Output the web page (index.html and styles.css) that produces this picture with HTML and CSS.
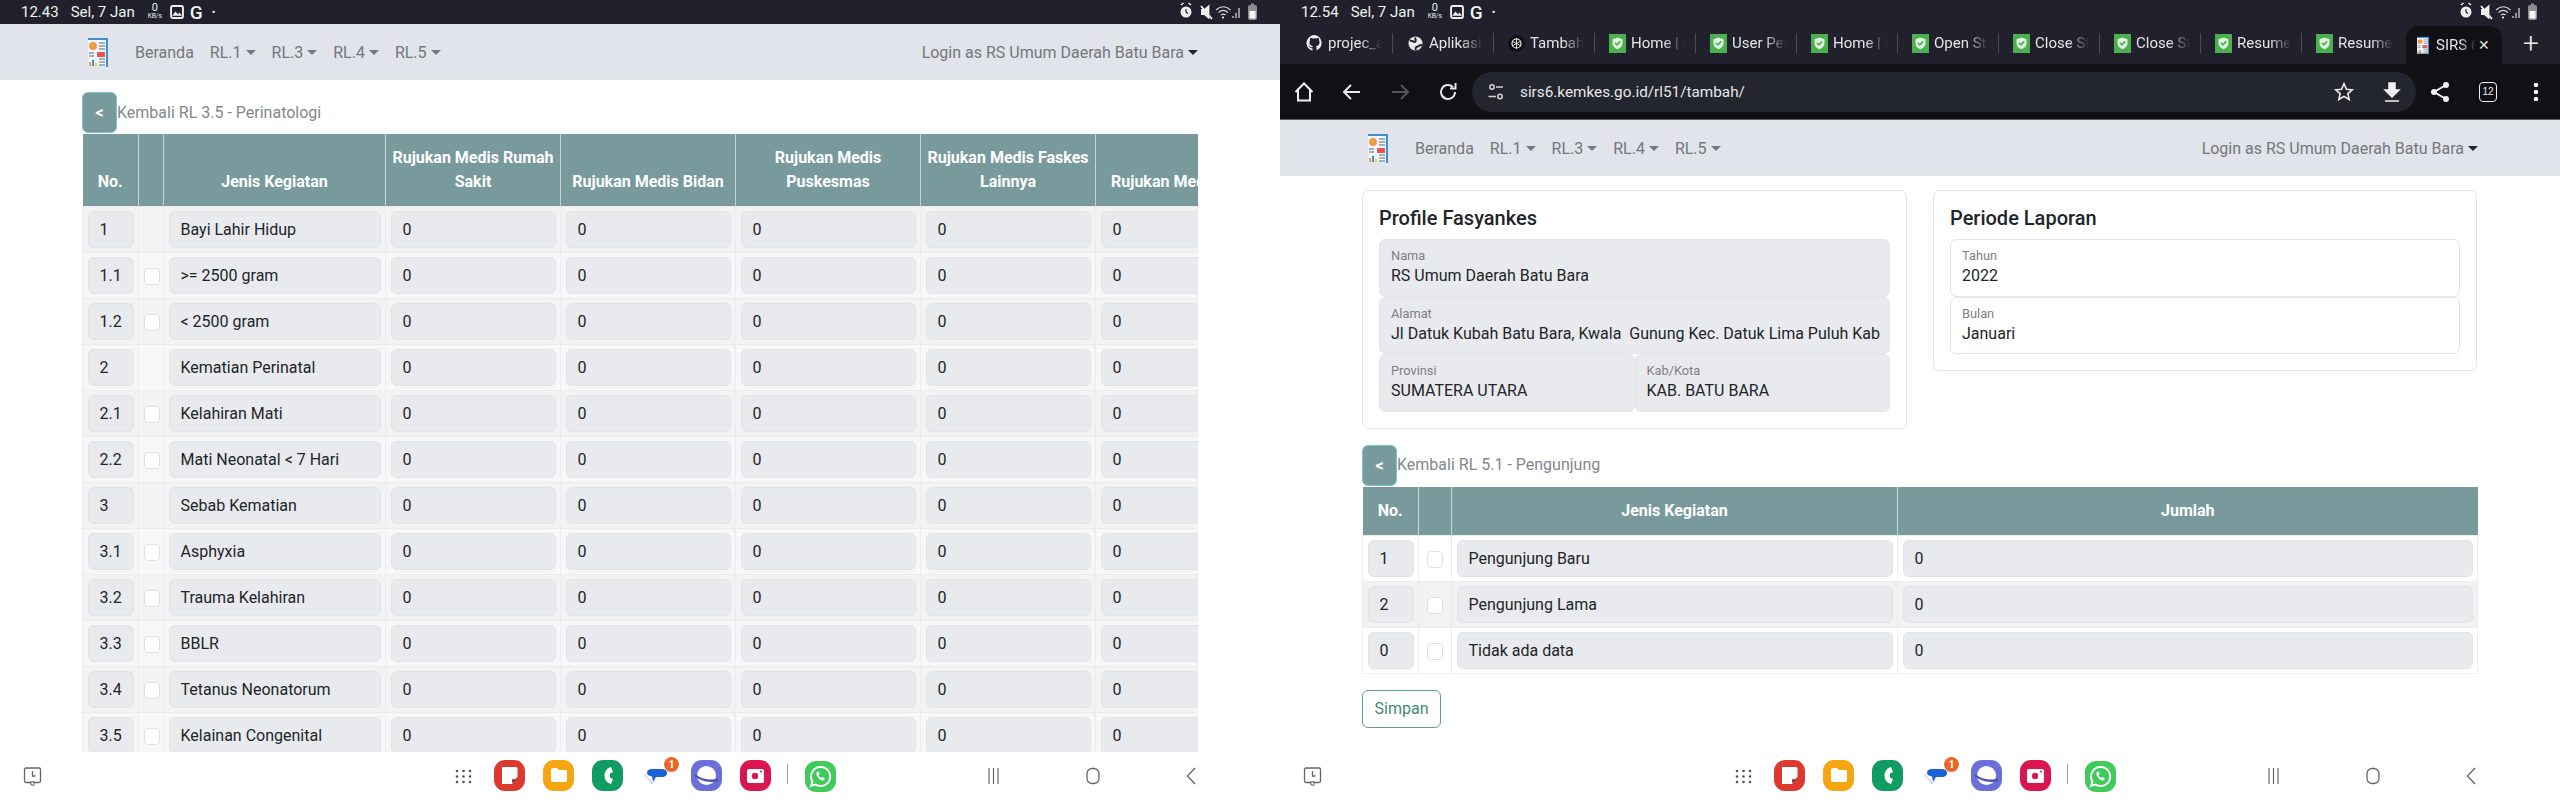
FILE: index.html
```html
<!DOCTYPE html>
<html lang="id">
<head>
  <meta charset="UTF-8" />
  <title>SIRS 6</title>
  <link rel="stylesheet" href="styles.css">
</head>
<body>

  <svg class="defs" width="0" height="0">
    <symbol id="ico-shield" viewBox="0 0 17 19">
      <rect width="17" height="19" fill="#4caf50"/>
      <path d="M8.5 3.5l5 1.8v4c0 3-2.2 5-5 6-2.8-1-5-3-5-6v-4z" fill="#dff3df"/>
      <path d="M5.9 8.8l2 2 3.3-3.4" fill="none" stroke="#4caf50" stroke-width="1.6"/>
    </symbol>
    <symbol id="ico-logo" viewBox="0 0 20 29">
      <rect x="0" y="0" width="20" height="2" fill="#3f8fd0"/>
      <rect x="18" y="0" width="2" height="29" fill="#3f8fd0"/>
      <rect x="0" y="2" width="18" height="26" fill="#f2f5f8"/>
      <circle cx="5" cy="8" r="4" fill="#ef9a4a"/>
      <path d="M11 5h6M11 8h6M11 11h6M1 15h5M1 18h5M11 24h6M11 21h6M11 27h6" stroke="#8a97a3" stroke-width="1.3"/>
      <rect x="9" y="14" width="8" height="5" fill="#e0565a"/>
      <rect x="1" y="24" width="2" height="4" fill="#ef9a4a"/>
      <rect x="4" y="22" width="2" height="6" fill="#3f8fd0"/>
      <rect x="7" y="25" width="2" height="3" fill="#e8c14a"/>
    </symbol>
    <symbol id="ico-status" viewBox="0 0 80 20">
      <circle cx="6" cy="10" r="5.5" fill="#f1f1f1"/>
      <path d="M1 3l2.5-2M11 3L8.5 1" stroke="#f1f1f1" stroke-width="1.6"/>
      <path d="M6 7v3l2 1.5" stroke="#20212d" stroke-width="1.2" fill="none"/>
      <path d="M22 8h2.5l4-3.5v11l-4-3.5H22zM21 4l11 13" stroke="#f1f1f1" stroke-width="1.8" fill="#f1f1f1"/>
      <path d="M36 8c4.5-4 10-4 14.5 0M38.5 10.5c3-2.6 6.5-2.6 9.5 0M41 13c1.5-1.2 3-1.2 4.5 0" stroke="#d8d8d8" stroke-width="1.1" fill="none"/>
      <circle cx="43" cy="15.5" r="1.1" fill="#f1f1f1"/>
      <path d="M53 16v-2M56 16v-5M59 16V6" stroke="#cfcfcf" stroke-width="1.3"/>
      <rect x="68" y="3" width="9" height="15" rx="2" fill="#8c8d94"/>
      <rect x="69.5" y="9" width="6" height="7.5" fill="#f4f4f4"/>
      <rect x="71" y="1.5" width="3" height="2" fill="#8c8d94"/>
    </symbol>
    <symbol id="ico-apps" viewBox="0 0 350 32">
      <!-- dock icons, drawn on one strip -->
      <rect x="39" y="0" width="31" height="31" rx="11" fill="#dc3a2e"/>
      <path d="M47 7h14a1.5 1.5 0 011.5 1.5V17l-5 7H47z" fill="#fff"/>
      <path d="M57 19c2 1 3.5 0 5.5-1.5l-5 6.5z" fill="#8a1f18"/>
      <rect x="88" y="0" width="31" height="31" rx="11" fill="#f5a50f"/>
      <path d="M96 10a2 2 0 012-2h4l2 2h6a2 2 0 012 2v8a2 2 0 01-2 2H98a2 2 0 01-2-2z" fill="#fff"/>
      <rect x="137" y="0" width="31" height="31" rx="11" fill="#0f9d64"/>
      <path d="M156 7c-4 1-6.5 4.5-6.5 8.5s2.5 7.5 6.5 8.5l2-5-3-1.5v-4l3-1.5z" fill="#fff"/>
      <rect x="186" y="0" width="31" height="31" rx="11" fill="#fff"/>
      <path d="M192 13c0-2.5 2-4 5-4h10c3 0 5 1.5 5 4s-2 4-5 4h-6l-3 5-1-5.5c-3-.5-5-1.5-5-3.5z" fill="#1a62d6"/>
      <path d="M190 14c0 3 2 5 5 5.5l2 4 3-4" fill="none" stroke="#a9c6f3" stroke-width="1"/>
      <rect x="236" y="0" width="31" height="31" rx="11" fill="#6a6fd9"/>
      <circle cx="251.5" cy="15.5" r="9.5" fill="#fff"/>
      <path d="M240 15c5 5 15 7 23 5" fill="none" stroke="#4a4fb8" stroke-width="2.4"/>
      <rect x="285" y="0" width="31" height="31" rx="11" fill="#d9164f"/>
      <rect x="292" y="9" width="17" height="14" rx="2" fill="#fff"/>
      <circle cx="300" cy="16" r="3.2" fill="#d9164f"/>
      <circle cx="306" cy="11.5" r="1" fill="#d9164f"/>
      <rect x="332" y="4" width="1" height="20" fill="#9a9a9a"/>
    </symbol>
    <symbol id="ico-wa" viewBox="0 0 31 31">
      <rect width="31" height="31" rx="11" fill="#3ecb5a"/>
      <path d="M15.5 6a9.5 9.5 0 00-8 14.5L6 25l4.7-1.4A9.5 9.5 0 1015.5 6z" fill="none" stroke="#fff" stroke-width="2"/>
      <path d="M12 11c-1 1-1 3 1 5.5s4.5 3.5 6 2.5l1-1.5-2.5-1.5-1 1c-1.5-.5-2.5-2-3-3l1-1-1-2.5z" fill="#fff"/>
    </symbol>
  </svg>

  <div class="screens">

    <!-- tablet kiri: RL 3.5 -->
    <section class="screen">
      <div class="status">
        <div class="status-left">
          <span class="time">12.43</span><span class="date">Sel, 7 Jan</span>
          <span class="speed"><b>0</b><i>KB/s</i></span>
          <svg class="pic" viewBox="0 0 13 13"><rect x="1" y="1" width="11" height="11" rx="1.5" fill="none" stroke="#eee" stroke-width="1.8"/><path d="M2 10l3-4 2.5 2.5L9 7l2 3z" fill="#eee"/></svg>
          <span class="g">G</span><span class="dot">•</span>
        </div>
        <svg class="status-right"><use href="#ico-status"/></svg>
      </div>

      <nav class="navbar">
        <svg class="logo"><use href="#ico-logo"/></svg>
        <a class="nav-link">Beranda</a>
        <a class="nav-link drop">RL.1</a>
        <a class="nav-link drop">RL.3</a>
        <a class="nav-link drop">RL.4</a>
        <a class="nav-link drop">RL.5</a>
        <a class="nav-user drop">Login as RS Umum Daerah Batu Bara</a>
      </nav>

      <main class="content">
        <div class="back-row">
          <button class="btn-back">&lt;</button>
          <span class="back-text">Kembali RL 3.5 - Perinatologi</span>
        </div>
        <div class="table-scroll">
          <table class="tbl tbl-wide">
            <colgroup>
              <col class="c-no"><col class="c-check"><col class="c-name">
              <col class="c-175"><col class="c-175"><col class="c-185"><col class="c-175"><col class="c-185">
            </colgroup>
            <thead>
              <tr>
                <th>No.</th><th></th><th>Jenis Kegiatan</th>
                <th>Rujukan Medis Rumah Sakit</th><th>Rujukan Medis Bidan</th><th>Rujukan Medis Puskesmas</th><th>Rujukan Medis Faskes Lainnya</th><th class="th-cut">Rujukan Medis</th>
              </tr>
            </thead>
            <tbody>
              <tr><td><div class="fc">1</div></td><td></td><td><div class="fc">Bayi Lahir Hidup</div></td><td><div class="fc">0</div></td><td><div class="fc">0</div></td><td><div class="fc">0</div></td><td><div class="fc">0</div></td><td><div class="fc">0</div></td></tr>
              <tr><td><div class="fc">1.1</div></td><td><input type="checkbox" class="chk"></td><td><div class="fc">&gt;= 2500 gram</div></td><td><div class="fc">0</div></td><td><div class="fc">0</div></td><td><div class="fc">0</div></td><td><div class="fc">0</div></td><td><div class="fc">0</div></td></tr>
              <tr><td><div class="fc">1.2</div></td><td><input type="checkbox" class="chk"></td><td><div class="fc">&lt; 2500 gram</div></td><td><div class="fc">0</div></td><td><div class="fc">0</div></td><td><div class="fc">0</div></td><td><div class="fc">0</div></td><td><div class="fc">0</div></td></tr>
              <tr><td><div class="fc">2</div></td><td></td><td><div class="fc">Kematian Perinatal</div></td><td><div class="fc">0</div></td><td><div class="fc">0</div></td><td><div class="fc">0</div></td><td><div class="fc">0</div></td><td><div class="fc">0</div></td></tr>
              <tr><td><div class="fc">2.1</div></td><td><input type="checkbox" class="chk"></td><td><div class="fc">Kelahiran Mati</div></td><td><div class="fc">0</div></td><td><div class="fc">0</div></td><td><div class="fc">0</div></td><td><div class="fc">0</div></td><td><div class="fc">0</div></td></tr>
              <tr><td><div class="fc">2.2</div></td><td><input type="checkbox" class="chk"></td><td><div class="fc">Mati Neonatal &lt; 7 Hari</div></td><td><div class="fc">0</div></td><td><div class="fc">0</div></td><td><div class="fc">0</div></td><td><div class="fc">0</div></td><td><div class="fc">0</div></td></tr>
              <tr><td><div class="fc">3</div></td><td></td><td><div class="fc">Sebab Kematian</div></td><td><div class="fc">0</div></td><td><div class="fc">0</div></td><td><div class="fc">0</div></td><td><div class="fc">0</div></td><td><div class="fc">0</div></td></tr>
              <tr><td><div class="fc">3.1</div></td><td><input type="checkbox" class="chk"></td><td><div class="fc">Asphyxia</div></td><td><div class="fc">0</div></td><td><div class="fc">0</div></td><td><div class="fc">0</div></td><td><div class="fc">0</div></td><td><div class="fc">0</div></td></tr>
              <tr><td><div class="fc">3.2</div></td><td><input type="checkbox" class="chk"></td><td><div class="fc">Trauma Kelahiran</div></td><td><div class="fc">0</div></td><td><div class="fc">0</div></td><td><div class="fc">0</div></td><td><div class="fc">0</div></td><td><div class="fc">0</div></td></tr>
              <tr><td><div class="fc">3.3</div></td><td><input type="checkbox" class="chk"></td><td><div class="fc">BBLR</div></td><td><div class="fc">0</div></td><td><div class="fc">0</div></td><td><div class="fc">0</div></td><td><div class="fc">0</div></td><td><div class="fc">0</div></td></tr>
              <tr><td><div class="fc">3.4</div></td><td><input type="checkbox" class="chk"></td><td><div class="fc">Tetanus Neonatorum</div></td><td><div class="fc">0</div></td><td><div class="fc">0</div></td><td><div class="fc">0</div></td><td><div class="fc">0</div></td><td><div class="fc">0</div></td></tr>
              <tr><td><div class="fc">3.5</div></td><td><input type="checkbox" class="chk"></td><td><div class="fc">Kelainan Congenital</div></td><td><div class="fc">0</div></td><td><div class="fc">0</div></td><td><div class="fc">0</div></td><td><div class="fc">0</div></td><td><div class="fc">0</div></td></tr>
            </tbody>
          </table>
        </div>
      </main>

      <div class="dock">
        <svg class="dock-clock" viewBox="0 0 19 19"><path d="M3 1h13a1.5 1.5 0 011.5 1.5V14a1.5 1.5 0 01-1.5 1.5H3A1.5 1.5 0 011.5 14V2.5A1.5 1.5 0 013 1z" fill="none" stroke="#666" stroke-width="1.3"/><path d="M9.5 4v5h3" fill="none" stroke="#666" stroke-width="1.3"/><circle cx="9.5" cy="16.5" r="1.8" fill="#fff" stroke="#666" stroke-width="1.2"/></svg>
        <svg class="dock-grid" viewBox="0 0 17 15"><g fill="#555"><circle cx="2" cy="2" r="1.3"/><circle cx="8.5" cy="2" r="1.3"/><circle cx="15" cy="2" r="1.3"/><circle cx="2" cy="7.5" r="1.3"/><circle cx="8.5" cy="7.5" r="1.3"/><circle cx="15" cy="7.5" r="1.3"/><circle cx="2" cy="13" r="1.3"/><circle cx="8.5" cy="13" r="1.3"/><circle cx="15" cy="13" r="1.3"/></g></svg>
        <div class="dock-apps">
          <svg class="apps-strip"><use href="#ico-apps"/></svg>
          <span class="badge">1</span>
        </div>
        <svg class="dock-wa"><use href="#ico-wa"/></svg>
        <svg class="nav-recent" viewBox="0 0 11 18"><path d="M1 1v16M5.5 1v16M10 1v16" stroke="#666" stroke-width="1.2"/></svg>
        <svg class="nav-home" viewBox="0 0 14 18"><rect x="1" y="1.5" width="12" height="15" rx="5" fill="none" stroke="#666" stroke-width="1.3"/></svg>
        <svg class="nav-back" viewBox="0 0 10 18"><path d="M9 1L1.5 9 9 17" fill="none" stroke="#666" stroke-width="1.3"/></svg>
      </div>
    </section>

    <!-- tablet kanan: RL 5.1 dengan browser -->
    <section class="screen">
      <div class="status">
        <div class="status-left">
          <span class="time">12.54</span><span class="date">Sel, 7 Jan</span>
          <span class="speed"><b>0</b><i>KB/s</i></span>
          <svg class="pic" viewBox="0 0 13 13"><rect x="1" y="1" width="11" height="11" rx="1.5" fill="none" stroke="#eee" stroke-width="1.8"/><path d="M2 10l3-4 2.5 2.5L9 7l2 3z" fill="#eee"/></svg>
          <span class="g">G</span><span class="dot">•</span>
        </div>
        <svg class="status-right"><use href="#ico-status"/></svg>
      </div>

      <div class="tabs">
        <div class="tab">
          <svg class="fav" viewBox="0 0 17 19"><path d="M8.5 1a8 8 0 00-2.5 15.600c.4 0 .5-.2.5-.4v-2c-2.200.5-2.700-.9-2.700-.9-.4-.9-.9-1.200-.9-1.200-.7-.5 0-.5 0-.5.8 0 1.200.8 1.200.8.700 1.200 1.900.9 2.400.7 0-.5.300-.9.500-1.100-1.800-.2-3.600-.9-3.600-4 0-.9.300-1.600.8-2.100-.1-.2-.4-1 .1-2.100 0 0 .7-.2 2.200.8a7.600 7.600 0 014 0c1.500-1 2.200-.8 2.200-.8.500 1.100.2 1.900.1 2.100.5.600.8 1.300.8 2.100 0 3.100-1.900 3.800-3.700 4 .3.300.6.700.6 1.500v2.200c0 .2.100.5.600.4A8 8 0 008.5 1z" fill="#f1f1f1"/></svg>
          <span class="tab-title">projec_a</span>
        </div>
        <div class="tab">
          <svg class="fav" viewBox="0 0 17 19"><circle cx="8.5" cy="9.5" r="7" fill="#e8e8e8"/><path d="M3 7c2-1 3 1 4.5 1S9 6 8 3.500M9 16c-1-2 0-3 1.500-3.500s2.500-2 4.500-1.500" fill="none" stroke="#1f212b" stroke-width="2"/></svg>
          <span class="tab-title">Aplikasi</span>
        </div>
        <div class="tab">
          <svg class="fav" viewBox="0 0 17 19"><circle cx="8.5" cy="9.5" r="8.5" fill="#111"/><circle cx="8.5" cy="9.5" r="4.5" fill="none" stroke="#eee" stroke-width="1.2"/><path d="M8.5 4v11M4 7l9 5M13 7l-9 5" stroke="#eee" stroke-width=".9"/></svg>
          <span class="tab-title">Tambah</span>
        </div>
        <div class="tab"><svg class="fav"><use href="#ico-shield"/></svg><span class="tab-title">Home | K</span></div>
        <div class="tab"><svg class="fav"><use href="#ico-shield"/></svg><span class="tab-title">User Pet</span></div>
        <div class="tab"><svg class="fav"><use href="#ico-shield"/></svg><span class="tab-title">Home | K</span></div>
        <div class="tab"><svg class="fav"><use href="#ico-shield"/></svg><span class="tab-title">Open St</span></div>
        <div class="tab"><svg class="fav"><use href="#ico-shield"/></svg><span class="tab-title">Close St</span></div>
        <div class="tab"><svg class="fav"><use href="#ico-shield"/></svg><span class="tab-title">Close St</span></div>
        <div class="tab"><svg class="fav"><use href="#ico-shield"/></svg><span class="tab-title">Resume</span></div>
        <div class="tab tab-last"><svg class="fav"><use href="#ico-shield"/></svg><span class="tab-title">Resume</span></div>
        <div class="tab-active">
          <svg class="fav-logo"><use href="#ico-logo"/></svg>
          <span class="tab-title">SIRS 6</span>
          <span class="tab-close">✕</span>
        </div>
        <span class="tab-new">+</span>
      </div>

      <div class="toolbar">
        <button class="tool"><svg viewBox="0 0 24 24" width="24" height="24"><path d="M3.5 12L12 3.5 20.5 12M6 10v10.5h12V10" fill="none" stroke="#f1f1f1" stroke-width="2"/></svg></button>
        <button class="tool"><svg viewBox="0 0 24 24" width="24" height="24"><path d="M20 12H5M11 5l-7 7 7 7" fill="none" stroke="#e8e8e8" stroke-width="2"/></svg></button>
        <button class="tool"><svg viewBox="0 0 24 24" width="24" height="24"><path d="M4 12h15M13 5l7 7-7 7" fill="none" stroke="#55565c" stroke-width="2"/></svg></button>
        <button class="tool"><svg viewBox="0 0 24 24" width="24" height="24"><path d="M19 12a7 7 0 11-2.2-5.100M19.500 3v5.500H14" fill="none" stroke="#e8e8e8" stroke-width="2"/></svg></button>
        <div class="omnibox">
          <button class="tool"><svg viewBox="0 0 20 20" width="20" height="20"><g fill="none" stroke="#d5d5d5" stroke-width="1.5"><circle cx="6" cy="5" r="2.2"/><path d="M10 5h7M2.5 14.5H10"/><circle cx="14" cy="14.5" r="2.2"/></g></svg></button>
          <span class="url">sirs6.kemkes.go.id/rl51/tambah/</span>
          <button class="tool tool-end"><svg viewBox="0 0 24 24" width="22" height="22"><path d="M12 3l2.7 6 6.3.6-4.8 4.2 1.5 6.4-5.7-3.4-5.7 3.4 1.5-6.4L3 9.600 9.300 9z" fill="none" stroke="#f1f1f1" stroke-width="1.7"/></svg></button>
          <button class="tool"><svg viewBox="0 0 24 24" width="24" height="24"><path d="M9 3h6v7h4l-7 7-7-7h4zM5 21h14" fill="#f1f1f1" stroke="#f1f1f1" stroke-width="1.5"/></svg></button>
        </div>
        <button class="tool"><svg viewBox="0 0 24 24" width="24" height="24"><circle cx="18" cy="5" r="3" fill="#f1f1f1"/><circle cx="6" cy="12" r="3" fill="#f1f1f1"/><circle cx="18" cy="19" r="3" fill="#f1f1f1"/><path d="M18 5L6 12l12 7" fill="none" stroke="#f1f1f1" stroke-width="2"/></svg></button>
        <button class="tool"><span class="tab-count">12</span></button>
        <button class="tool"><svg viewBox="0 0 24 24" width="24" height="24"><circle cx="12" cy="5" r="2.3" fill="#f1f1f1"/><circle cx="12" cy="12" r="2.3" fill="#f1f1f1"/><circle cx="12" cy="19" r="2.3" fill="#f1f1f1"/></svg></button>
      </div>

      <nav class="navbar">
        <svg class="logo"><use href="#ico-logo"/></svg>
        <a class="nav-link">Beranda</a>
        <a class="nav-link drop">RL.1</a>
        <a class="nav-link drop">RL.3</a>
        <a class="nav-link drop">RL.4</a>
        <a class="nav-link drop">RL.5</a>
        <a class="nav-user drop">Login as RS Umum Daerah Batu Bara</a>
      </nav>

      <main class="content content-form">
        <div class="cards">
          <div class="card">
            <h5>Profile Fasyankes</h5>
            <div class="field filled"><label>Nama</label><div class="val">RS Umum Daerah Batu Bara</div></div>
            <div class="field filled"><label>Alamat</label><div class="val">Jl Datuk Kubah Batu Bara, Kwala  Gunung Kec. Datuk Lima Puluh Kab</div></div>
            <div class="field-row">
              <div class="field filled"><label>Provinsi</label><div class="val">SUMATERA UTARA</div></div>
              <div class="field filled"><label>Kab/Kota</label><div class="val">KAB. BATU BARA</div></div>
            </div>
          </div>
          <div class="card card-side">
            <h5>Periode Laporan</h5>
            <div class="field"><label>Tahun</label><div class="val">2022</div></div>
            <div class="field"><label>Bulan</label><div class="val">Januari</div></div>
          </div>
        </div>

        <div class="back-row">
          <button class="btn-back">&lt;</button>
          <span class="back-text">Kembali RL 5.1 - Pengunjung</span>
        </div>
        <table class="tbl tbl-short">
          <colgroup><col class="c-no"><col class="c-check2"><col class="c-name2"><col class="c-jumlah"></colgroup>
          <thead>
            <tr><th>No.</th><th></th><th>Jenis Kegiatan</th><th>Jumlah</th></tr>
          </thead>
          <tbody>
            <tr><td><div class="fc">1</div></td><td><input type="checkbox" class="chk"></td><td><div class="fc">Pengunjung Baru</div></td><td><div class="fc">0</div></td></tr>
            <tr><td><div class="fc">2</div></td><td><input type="checkbox" class="chk"></td><td><div class="fc">Pengunjung Lama</div></td><td><div class="fc">0</div></td></tr>
            <tr><td><div class="fc">0</div></td><td><input type="checkbox" class="chk"></td><td><div class="fc">Tidak ada data</div></td><td><div class="fc">0</div></td></tr>
          </tbody>
        </table>
        <button class="btn-simpan">Simpan</button>
      </main>

      <div class="dock">
        <svg class="dock-clock" viewBox="0 0 19 19"><path d="M3 1h13a1.5 1.5 0 011.5 1.5V14a1.5 1.5 0 01-1.5 1.5H3A1.5 1.5 0 011.5 14V2.5A1.5 1.5 0 013 1z" fill="none" stroke="#666" stroke-width="1.3"/><path d="M9.5 4v5h3" fill="none" stroke="#666" stroke-width="1.3"/><circle cx="9.5" cy="16.5" r="1.8" fill="#fff" stroke="#666" stroke-width="1.2"/></svg>
        <svg class="dock-grid" viewBox="0 0 17 15"><g fill="#555"><circle cx="2" cy="2" r="1.3"/><circle cx="8.5" cy="2" r="1.3"/><circle cx="15" cy="2" r="1.3"/><circle cx="2" cy="7.5" r="1.3"/><circle cx="8.5" cy="7.5" r="1.3"/><circle cx="15" cy="7.5" r="1.3"/><circle cx="2" cy="13" r="1.3"/><circle cx="8.5" cy="13" r="1.3"/><circle cx="15" cy="13" r="1.3"/></g></svg>
        <div class="dock-apps">
          <svg class="apps-strip"><use href="#ico-apps"/></svg>
          <span class="badge">1</span>
        </div>
        <svg class="dock-wa"><use href="#ico-wa"/></svg>
        <svg class="nav-recent" viewBox="0 0 11 18"><path d="M1 1v16M5.5 1v16M10 1v16" stroke="#666" stroke-width="1.2"/></svg>
        <svg class="nav-home" viewBox="0 0 14 18"><rect x="1" y="1.5" width="12" height="15" rx="5" fill="none" stroke="#666" stroke-width="1.3"/></svg>
        <svg class="nav-back" viewBox="0 0 10 18"><path d="M9 1L1.5 9 9 17" fill="none" stroke="#666" stroke-width="1.3"/></svg>
      </div>
    </section>

  </div>
</body>
</html>
```

FILE: styles.css
```css
* {
  box-sizing: border-box;
}

body {
  margin: 0;
  font-family: Roboto, "Liberation Sans", sans-serif;
  font-size: 16px;
  color: #212529;
  background: #fff;
}

.defs {
  display: block;
  height: 0;
}

.screens {
  display: flex;
  width: 2560px;
  height: 800px;
  overflow: hidden;
}

.screen {
  display: flex;
  flex-direction: column;
  width: 1280px;
  height: 800px;
}

/* Status bar android */
.status {
  display: flex;
  align-items: center;
  justify-content: space-between;
  flex: none;
  height: 24px;
  padding: 0 20px 0 21px;
  background: #20212d;
  color: #f1f1f1;
}

.status-left {
  display: flex;
  align-items: center;
  font-size: 15px;
}

.date {
  margin-left: 12px;
}

.speed {
  display: flex;
  flex-direction: column;
  align-items: center;
  width: 18px;
  margin-left: 11px;
  line-height: 8px;
}

.speed b {
  font-size: 11px;
  font-weight: 400;
}

.speed i {
  font-size: 6.5px;
  font-style: normal;
}

.pic {
  width: 14px;
  height: 14px;
  margin-left: 6px;
}

.g {
  margin-left: 6px;
  font-size: 19px;
  font-weight: 500;
}

.dot {
  margin-left: 9px;
  font-size: 11px;
}

.status-right {
  width: 80px;
  height: 20px;
}

/* Strip tab chrome */
.tabs {
  display: flex;
  align-items: center;
  flex: none;
  height: 40px;
  padding-left: 12px;
  background: #20212d;
  color: #e4e4e4;
  font-size: 15px;
}

.tab {
  display: flex;
  align-items: center;
  gap: 5px;
  flex: none;
  width: 101px;
  height: 20px;
  margin-bottom: 2px;
  padding-left: 14px;
  border-right: 1px solid #4a4c55;
}

.tab-last {
  border-right: 0;
}

.fav {
  flex: none;
  width: 17px;
  height: 19px;
}

.tab-title {
  flex: 1;
  min-width: 0;
  margin-right: 10px;
  overflow: hidden;
  white-space: nowrap;
  -webkit-mask-image: linear-gradient(to right, #000 60%, transparent);
  mask-image: linear-gradient(to right, #000 60%, transparent);
}

.tab-active {
  display: flex;
  align-items: center;
  flex: none;
  width: 96px;
  height: 38px;
  margin-left: 3px;
  margin-top: 2px;
  padding-left: 11px;
  background: #101114;
  border-radius: 12px 12px 0 0;
}

.fav-logo {
  flex: none;
  width: 12px;
  height: 19px;
  margin-right: 7px;
}

.tab-active .tab-title {
  margin-right: 2px;
}

.tab-close {
  flex: none;
  width: 24px;
  font-size: 14px;
}

.tab-new {
  margin-left: 21px;
  color: #eee;
  font-size: 28px;
  font-weight: 300;
  line-height: 1;
}

/* Toolbar chrome */
.toolbar {
  display: flex;
  align-items: center;
  flex: none;
  height: 56px;
  background: #101114;
  border-bottom: 1px solid #5c5e63;
}

.tool {
  display: flex;
  align-items: center;
  justify-content: center;
  flex: none;
  width: 48px;
  height: 40px;
  padding: 0;
  border: 0;
  background: none;
}

.omnibox {
  display: flex;
  align-items: center;
  flex: none;
  width: 944px;
  height: 40px;
  background: #23252f;
  border-radius: 20px;
}

.url {
  color: #e8e8e8;
  font-size: 15.3px;
}

.tool-end {
  margin-left: auto;
}

.tab-count {
  display: block;
  width: 18px;
  height: 20px;
  border: 1.5px solid #eee;
  border-radius: 4px;
  color: #eee;
  font-size: 10px;
  line-height: 17px;
  text-align: center;
}

/* Navbar aplikasi */
.navbar {
  display: flex;
  align-items: center;
  flex: none;
  height: 56px;
  padding-left: 88px;
  padding-right: 82px;
  background: #e1e4ea;
  color: #74777c;
}

.logo {
  width: 20px;
  height: 29px;
  margin-right: 19px;
}

.nav-link {
  padding: 8px;
}

.drop::after {
  content: "";
  display: inline-block;
  margin-left: 4px;
  vertical-align: 3px;
  border-top: 5px solid;
  border-left: 5px solid transparent;
  border-right: 5px solid transparent;
}

.nav-user {
  margin-left: auto;
}

.nav-user::after {
  color: #212529;
}

/* Isi halaman */
.content {
  flex: 1;
  min-height: 0;
  overflow: hidden;
  padding: 12px 82px 0;
}

.content-form {
  padding-top: 14px;
}

.back-row {
  display: flex;
  align-items: center;
  height: 42px;
}

.btn-back {
  align-self: flex-start;
  width: 35px;
  height: 41px;
  padding: 0;
  border: 1px solid #79c6d2;
  border-radius: 6px;
  background: #789a9c;
  color: #fff;
  font-family: inherit;
  font-size: 16px;
  font-weight: 700;
}

.back-text {
  color: #84878c;
  margin-top: -2px;
}

/* Tabel */
.table-scroll {
  width: 1116px;
  overflow: hidden;
}

.tbl {
  table-layout: fixed;
  border-collapse: collapse;
}

.tbl-wide {
  width: 1176px;
}

.tbl-short {
  width: 1115px;
}

.c-no { width: 56px; }
.c-check { width: 25px; }
.c-name { width: 222px; }
.c-175 { width: 175px; }
.c-185 { width: 185px; }
.c-check2 { width: 33px; }
.c-name2 { width: 446px; }
.c-jumlah { width: 580px; }

.tbl th {
  padding: 12px 2px;
  background: #789a9c;
  border-left: 1px solid #c3d4d5;
  color: #fff;
  font-weight: 700;
  line-height: 24px;
  text-align: center;
  vertical-align: bottom;
}

.tbl th:first-child {
  border-left: 0;
}

.tbl th.th-cut {
  padding-left: 15px;
  text-align: left;
  white-space: nowrap;
}

.tbl td {
  height: 46px;
  padding: 0 4.5px;
  border: 1px solid #ececec;
  text-align: center;
  vertical-align: middle;
}

.tbl-wide tbody tr:nth-child(odd) {
  background: #f3f3f4;
}

.tbl-wide tbody tr:nth-child(even) {
  background: #f7f7f7;
}

.tbl-short tbody tr:nth-child(even) {
  background: #f2f2f3;
}

.fc {
  height: 37px;
  padding: 0 11px;
  overflow: hidden;
  border: 1px solid #e1e3e7;
  border-radius: 6px;
  background: #e9eaee;
  color: #212529;
  line-height: 35px;
  text-align: left;
  white-space: nowrap;
}

.chk {
  -webkit-appearance: none;
  appearance: none;
  display: block;
  width: 16px;
  height: 17px;
  margin: 2px auto 0;
  border: 1px solid #dfe1e5;
  border-radius: 4px;
  background: #fff;
}

.btn-simpan {
  display: block;
  width: 79px;
  height: 38px;
  margin-top: 16px;
  padding: 0;
  border: 1px solid #5f9a9a;
  border-radius: 6px;
  background: #fff;
  color: #3f8a72;
  font-family: inherit;
  font-size: 16px;
}

/* Kartu form */
.cards {
  display: flex;
  align-items: flex-start;
  gap: 26px;
  margin-bottom: 16px;
  width: 1115px;
}

.card {
  flex: none;
  width: 545px;
  padding: 16px;
  border: 1px solid #e4e6e8;
  border-radius: 6px;
}

.card-side {
  width: 544px;
}

.card h5 {
  margin: 0 0 10px;
  font-size: 20px;
  font-weight: 500;
  line-height: 22px;
}

.field {
  height: 57.67px;
  padding: 7px 11px 0;
  overflow: hidden;
  border: 1px solid #e4e6e8;
  border-radius: 6px;
}

.field.filled {
  background: #e9eaee;
}

.field label {
  display: block;
  color: #7d8085;
  font-size: 12.8px;
  line-height: 18px;
}

.val {
  line-height: 22px;
  white-space: pre;
}

.field-row {
  display: flex;
}

.field-row .field {
  flex: 1;
  min-width: 0;
}

/* Dock bawah */
.dock {
  display: flex;
  align-items: center;
  flex: none;
  height: 48px;
  padding-left: 23px;
  background: #fff;
}

.dock-clock {
  width: 19px;
  height: 19px;
  margin-right: 413px;
}

.dock-grid {
  width: 17px;
  height: 15px;
}

.dock-apps {
  position: relative;
  width: 350px;
  height: 32px;
  margin-left: -17px;
}

.apps-strip {
  display: block;
  width: 350px;
  height: 32px;
}

.badge {
  position: absolute;
  left: 209px;
  top: -3px;
  width: 15px;
  height: 15px;
  border-radius: 50%;
  background: #e8672a;
  color: #fff;
  font-size: 10px;
  font-weight: 700;
  line-height: 15px;
  text-align: center;
}

.dock-wa {
  width: 31px;
  height: 31px;
}

.nav-recent {
  width: 11px;
  height: 18px;
  margin-left: 152px;
}

.nav-home {
  width: 14px;
  height: 18px;
  margin-left: 87px;
}

.nav-back {
  width: 10px;
  height: 18px;
  margin-left: 86px;
}
```
